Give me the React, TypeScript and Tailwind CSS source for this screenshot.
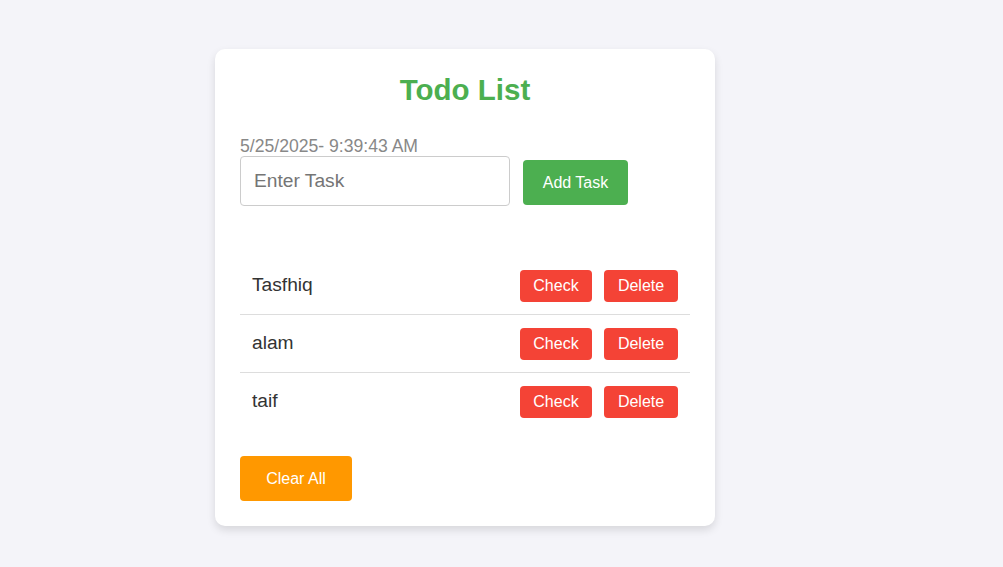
import React from 'react';

const tasks = ['Tasfhiq', 'alam', 'taif'];

export default function App() {
  return (
    <div
      className="min-h-[567px] w-full bg-[#f4f4f9] pt-[49px] pl-[215px]"
      style={{ fontFamily: '"Liberation Sans", Arial, sans-serif' }}
    >
      <div className="w-[500px] rounded-[10px] bg-white p-[25px] shadow-[0_4px_8px_rgba(0,0,0,0.12)]">
        <h1 className="text-center text-[29.5px] font-bold leading-[32px] text-[#4caf50]">Todo List</h1>

        <div className="mt-[30px] text-[17.6px] leading-[20px] text-[#888]">5/25/2025- 9:39:43 AM</div>

        <div className="flex items-start gap-[13px]">
          <input
            type="text"
            placeholder="Enter Task"
            className="h-[50px] w-[270px] rounded-[4px] border border-[#ccc] pl-[13px] text-[19.2px] text-[#333] outline-none placeholder:text-[#757575]"
          />
          <button className="mt-[4px] h-[45px] w-[105px] rounded-[4px] bg-[#4caf50] text-[16px] text-white">
            Add Task
          </button>
        </div>

        <ul className="mt-[51px]">
          {tasks.map((t, i) => (
            <li
              key={t}
              className={
                i < tasks.length - 1
                  ? 'flex h-[58px] items-center justify-between border-b border-[#ddd] px-[12px]'
                  : 'flex h-[57px] items-center justify-between px-[12px]'
              }
            >
              <span className="text-[19.2px] text-[#333]">{t}</span>
              <div className="flex gap-[12px]">
                <button className="h-[32px] w-[72px] rounded-[4px] bg-[#f44336] text-[16px] text-white">Check</button>
                <button className="h-[32px] w-[74px] rounded-[4px] bg-[#f44336] text-[16px] text-white">Delete</button>
              </div>
            </li>
          ))}
        </ul>

        <button className="mt-[26px] h-[45px] w-[112px] rounded-[4px] bg-[#ff9800] text-[16px] text-white">
          Clear All
        </button>
      </div>
    </div>
  );
}
